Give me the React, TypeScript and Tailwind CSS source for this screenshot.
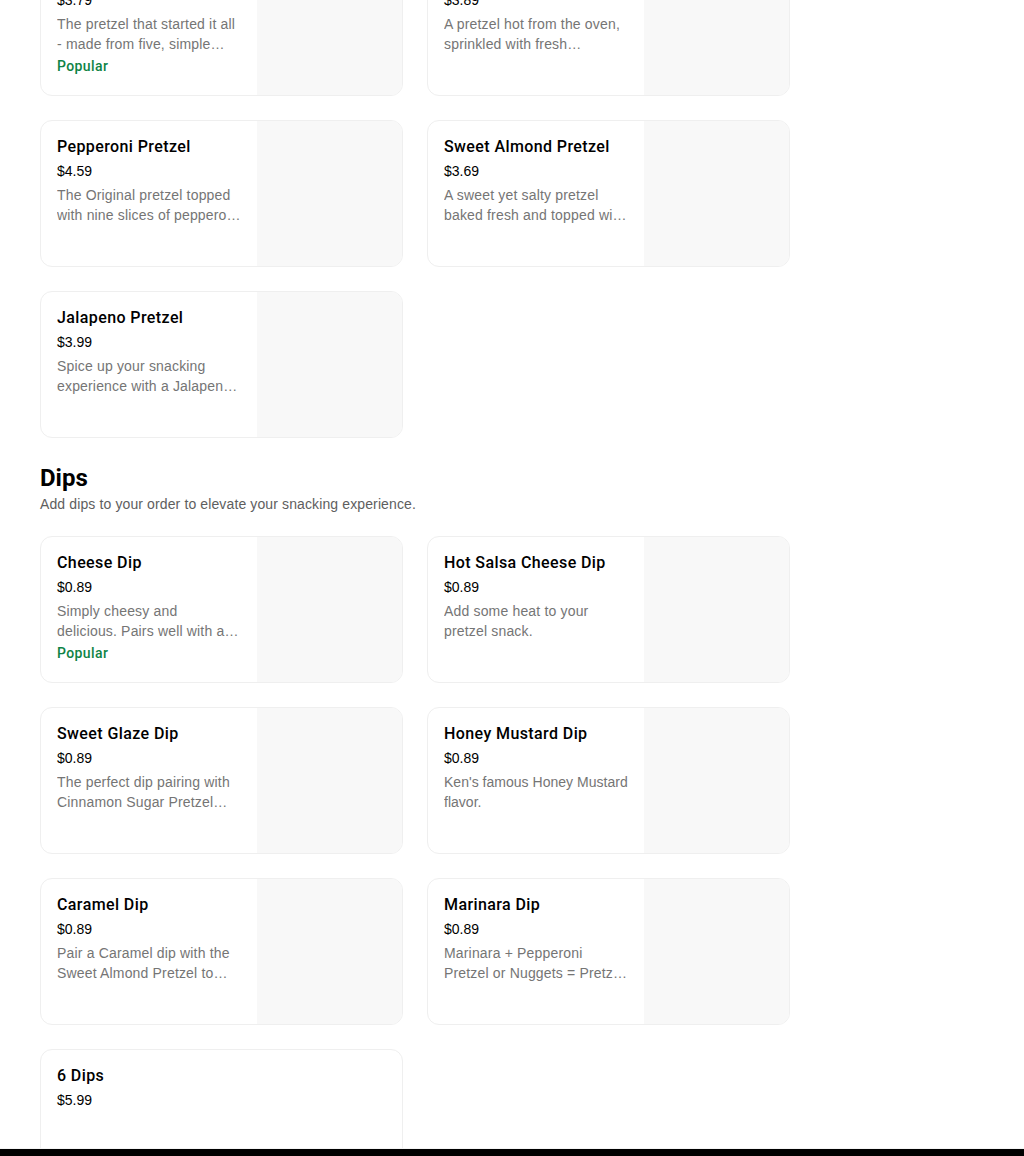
type Item = {
  title: string;
  price: string;
  desc?: string;
  popular?: boolean;
  image?: boolean;
  snug?: boolean; // tighter letter spacing so the line breaks where the reference does
};

const pretzels: Item[] = [
  {
    title: 'Original Pretzel',
    price: '$3.79',
    desc: 'The pretzel that started it all - made from five, simple ingredients and hand-rolled.',
    popular: true,
    image: true,
  },
  {
    title: 'Cinnamon Sugar Pretzel',
    price: '$3.89',
    desc: 'A pretzel hot from the oven, sprinkled with fresh cinnamon sugar.',
    image: true,
  },
  {
    title: 'Pepperoni Pretzel',
    price: '$4.59',
    desc: 'The Original pretzel topped with nine slices of pepperoni and melted cheese.',
    image: true,
  },
  {
    title: 'Sweet Almond Pretzel',
    price: '$3.69',
    desc: 'A sweet yet salty pretzel baked fresh and topped with sliced almonds.',
    image: true,
  },
  {
    title: 'Jalapeno Pretzel',
    price: '$3.99',
    desc: 'Spice up your snacking experience with a Jalapeno Pretzel topped with cheese.',
    image: true,
  },
];

const dips: Item[] = [
  {
    title: 'Cheese Dip',
    price: '$0.89',
    desc: 'Simply cheesy and delicious. Pairs well with any pretzel.',
    popular: true,
    image: true,
  },
  { title: 'Hot Salsa Cheese Dip', price: '$0.89', desc: 'Add some heat to your pretzel snack.', image: true },
  {
    title: 'Sweet Glaze Dip',
    price: '$0.89',
    desc: 'The perfect dip pairing with Cinnamon Sugar Pretzel Nuggets.',
    image: true,
  },
  {
    title: 'Honey Mustard Dip',
    price: '$0.89',
    desc: "Ken's famous Honey Mustard flavor.",
    image: true,
    snug: true,
  },
  {
    title: 'Caramel Dip',
    price: '$0.89',
    desc: 'Pair a Caramel dip with the Sweet Almond Pretzel to satisfy your sweet tooth.',
    image: true,
  },
  {
    title: 'Marinara Dip',
    price: '$0.89',
    desc: 'Marinara + Pepperoni Pretzel or Nuggets = Pretzel Pizza perfection.',
    image: true,
  },
  { title: '6 Dips', price: '$5.99' },
];

function MenuCard({ item }: { item: Item }) {
  return (
    <div className="flex h-[147px] overflow-hidden rounded-xl border border-[#efefef] bg-white">
      <div className="min-w-0 flex-1 px-4 pt-4">
        <div className="truncate font-['Roboto',sans-serif] text-[16px] font-medium leading-5 tracking-[0.4px] text-[#000000]">
          {item.title}
        </div>
        <div className="mt-1 text-[14px] leading-5 text-[#000000]">{item.price}</div>
        {item.desc && (
          <p
            className={
              item.snug
                ? 'mt-1 line-clamp-2 text-[14px] leading-5 tracking-[0.02px] text-[#757575]'
                : 'mt-1 line-clamp-2 text-[14px] leading-5 tracking-[0.17px] text-[#757575]'
            }
          >
            {item.desc}
          </p>
        )}
        {item.popular && (
          <div className="mt-[2px] font-['Roboto',sans-serif] text-[14px] font-medium leading-5 tracking-[0.4px] text-[#0e8345]">
            Popular
          </div>
        )}
      </div>
      {item.image && <div className="h-full w-[145px] shrink-0 bg-[#f8f8f8]" />}
    </div>
  );
}

export default function App() {
  return (
    <div className="flex h-[1156px] flex-col overflow-hidden bg-white font-['Liberation_Sans',Arial,sans-serif]">
      <main className="h-[1149px] shrink-0 overflow-hidden border-b border-[#f4f4f4] pl-10">
        {/* Pretzels (scrolled partly off the top) */}
        <div className="-mt-[51px] grid w-[750px] grid-cols-2 gap-6">
          {pretzels.map((p) => (
            <MenuCard key={p.title} item={p} />
          ))}
        </div>

        {/* Dips */}
        <section className="mt-6">
          <h2 className="font-['Roboto',sans-serif] text-[24px] font-bold leading-8 text-black">Dips</h2>
          <p className="text-[14px] leading-5 tracking-[0.12px] text-[#5e5e5e]">
            Add dips to your order to elevate your snacking experience.
          </p>
          <div className="mt-[22px] grid w-[750px] grid-cols-2 gap-6">
            {dips.map((d) => (
              <MenuCard key={d.title} item={d} />
            ))}
          </div>
        </section>
      </main>
      <footer className="flex-1 bg-black" />
    </div>
  );
}
